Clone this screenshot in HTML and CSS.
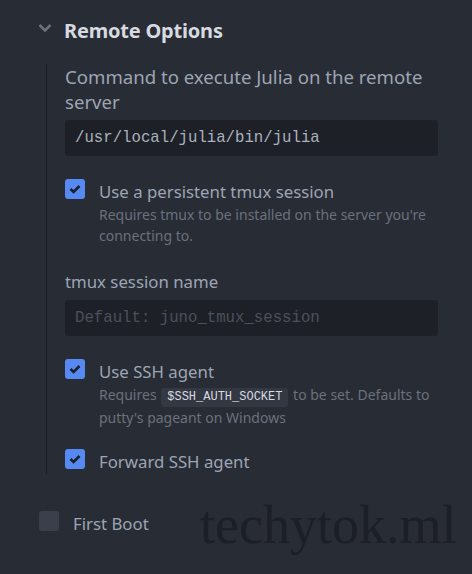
FILE: index.html
```html
<!DOCTYPE html>
<html>
<head>
<meta charset="utf-8">
<link rel="stylesheet" href="styles.css">
</head>
<body>
<div class="panel">
  <div class="section-head">
    <svg class="chevron" width="14" height="10" viewBox="0 0 14 10"><path d="M1.5 2 L7 7.5 L12.5 2" fill="none" stroke="#6b717d" stroke-width="2.6"/></svg>
    <span class="title">Remote Options</span>
  </div>
  <div class="group">
    <div class="control">
      <div class="label big">Command to execute Julia on the remote server</div>
      <div class="input">/usr/local/julia/bin/julia</div>
    </div>
    <div class="control check-row">
      <span class="box checked"><svg width="20" height="20" viewBox="0 0 20 20"><path d="M5.5 10 L8.6 13 L14.5 7" fill="none" stroke="#1c2029" stroke-width="2.6"/></svg></span>
      <div class="check-text">
        <div class="label">Use a persistent tmux session</div>
        <div class="desc">Requires tmux to be installed on the server you're connecting to.</div>
      </div>
    </div>
    <div class="control">
      <div class="label">tmux session name</div>
      <div class="input placeholder">Default: juno_tmux_session</div>
    </div>
    <div class="control check-row">
      <span class="box checked"><svg width="20" height="20" viewBox="0 0 20 20"><path d="M5.5 10 L8.6 13 L14.5 7" fill="none" stroke="#1c2029" stroke-width="2.6"/></svg></span>
      <div class="check-text">
        <div class="label">Use SSH agent</div>
        <div class="desc">Requires <code>$SSH_AUTH_SOCKET</code> to be set. Defaults to putty's pageant on Windows</div>
      </div>
    </div>
    <div class="control check-row last">
      <span class="box checked"><svg width="20" height="20" viewBox="0 0 20 20"><path d="M5.5 10 L8.6 13 L14.5 7" fill="none" stroke="#1c2029" stroke-width="2.6"/></svg></span>
      <div class="check-text">
        <div class="label">Forward SSH agent</div>
      </div>
    </div>
  </div>
  <div class="bottom-row check-row">
    <span class="box"></span>
    <div class="label">First Boot</div>
  </div>
</div>
<div class="watermark">techytok.ml</div>
</body>
</html>
```
FILE: styles.css
```css
html, body {
  margin: 0;
  padding: 0;
  background: #282c34;
}
body {
  width: 472px;
  height: 574px;
  overflow: hidden;
  position: relative;
  font-family: "Noto Sans", "Open Sans", sans-serif;
  color: #9da5b4;
}
.panel {
  padding-top: 16px;
}
.section-head {
  display: flex;
  align-items: center;
  padding-left: 38px;
  height: 28px;
}
.chevron {
  margin-right: 12px;
  margin-top: -4px;
}
.title {
  font-size: 20px;
  font-weight: 700;
  color: #d7dae0;
  letter-spacing: -0.2px;
}
.group {
  margin-left: 46px;
  margin-top: 20px;
  border-left: 1px solid #181a1f;
  padding-left: 18px;
  width: 373px;
}
.control {
  margin-top: 23px;
}
.control:first-child {
  margin-top: 0;
}
.label {
  font-size: 16.8px;
  line-height: 25px;
  color: #9da5b4;
}
.label.big {
  font-size: 18.6px;
}
.input {
  margin-top: 6px;
  height: 36px;
  box-sizing: border-box;
  background: #1d2026;
  border-radius: 3px;
  padding: 0 10px;
  font-family: "Liberation Mono", monospace;
  font-size: 15.7px;
  line-height: 36px;
  color: #abb2bf;
}
.input.placeholder {
  color: #4b515c;
}
.check-row {
  display: flex;
  align-items: flex-start;
}
.box {
  flex: none;
  width: 20px;
  height: 20px;
  border-radius: 3px;
  background: #3a3f4b;
  margin-right: 14px;
  display: block;
}
.box svg {
  display: block;
}
.box.checked {
  background: #568af2;
}
.desc {
  font-size: 14px;
  line-height: 21px;
  color: #6b717d;
}
code {
  display: inline-block;
  font-family: "Liberation Mono", monospace;
  font-size: 12px;
  line-height: 19px;
  color: #d7dae0;
  background: #333842;
  border-radius: 3px;
  padding: 0 6px;
  margin: 0 1px;
}
.control.last {
  margin-top: 21px;
}
.bottom-row {
  padding-left: 39px;
  margin-top: 37px;
}
.watermark {
  position: absolute;
  left: 200px;
  top: 495px;
  font-family: "Liberation Serif", serif;
  font-size: 54px;
  line-height: 60px;
  color: #1c1f25;
}
```
